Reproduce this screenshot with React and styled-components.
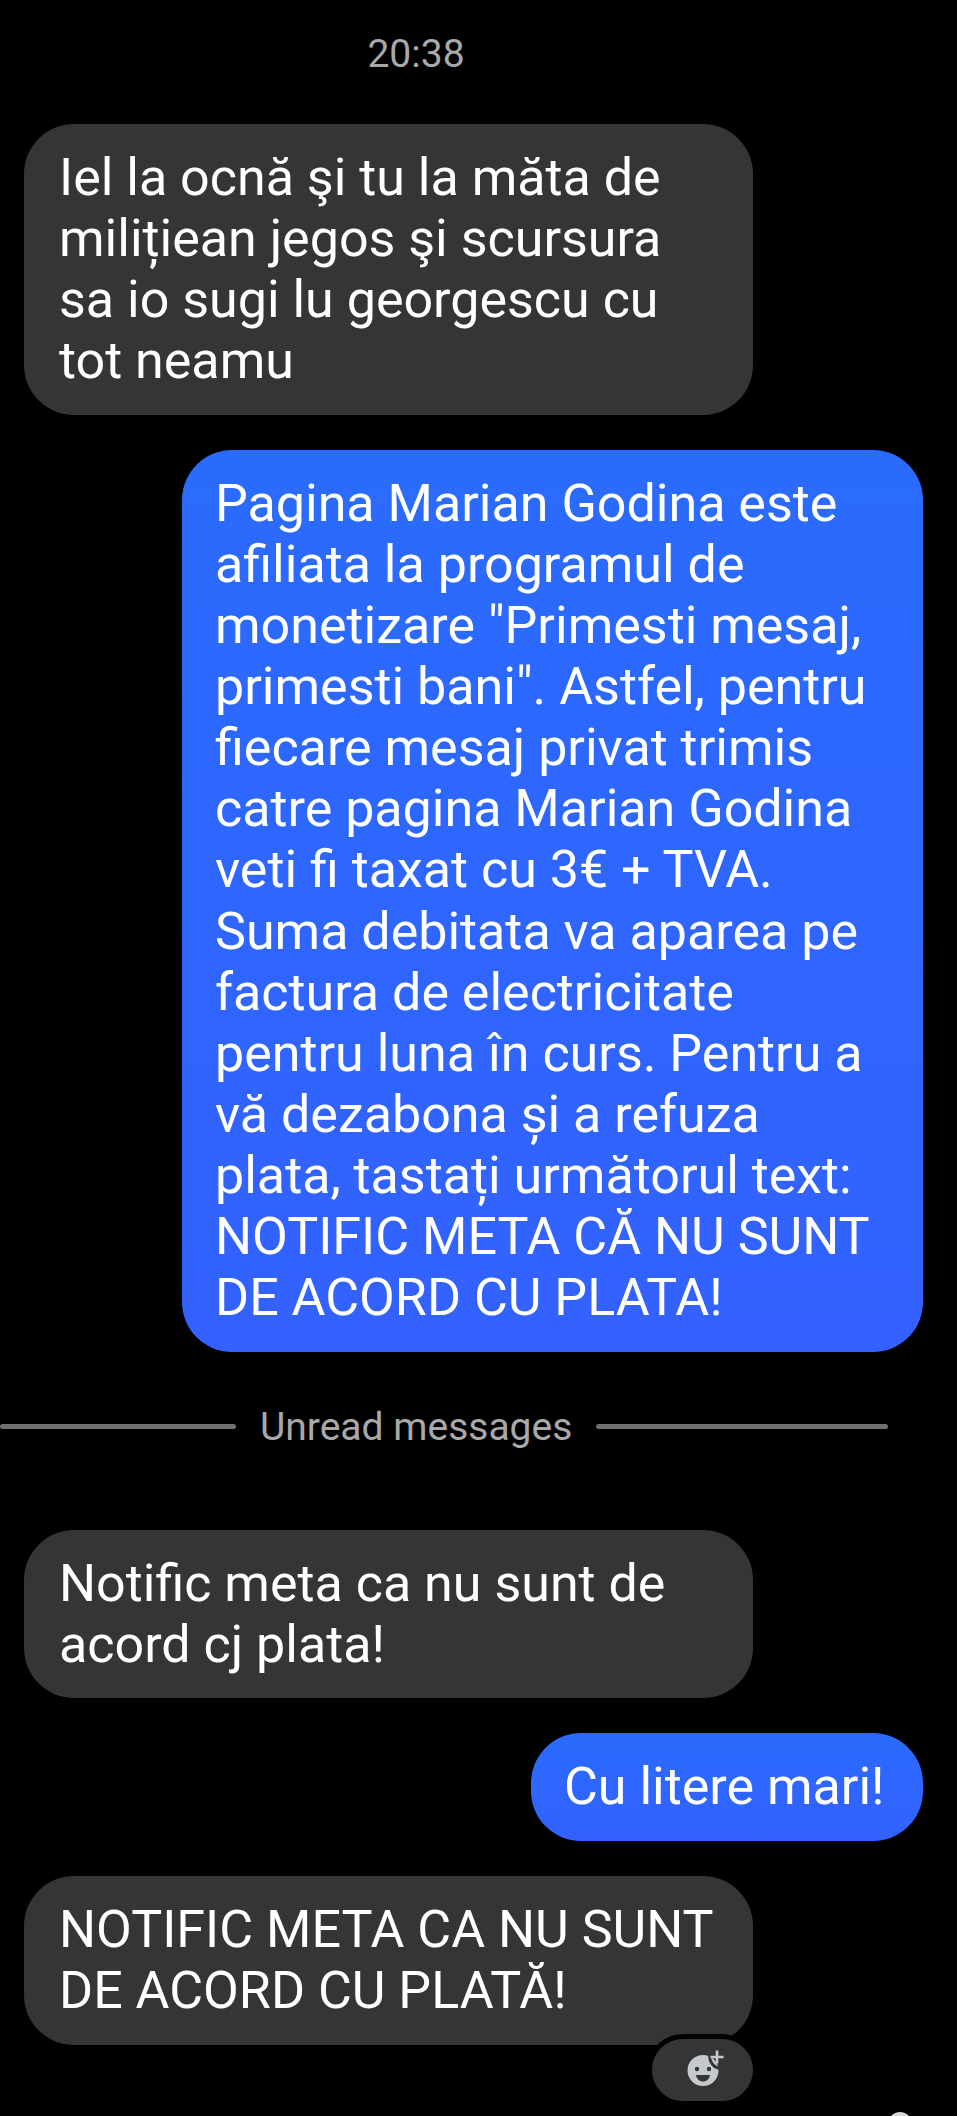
import React from "react";
import styled, { createGlobalStyle } from "styled-components";

const GlobalStyle = createGlobalStyle`
    html, body {
        margin: 0;
        padding: 0;
        background: #000;
    }
`;

const Screen = styled.div`
    position: relative;
    width: 957px;
    height: 2116px;
    overflow: hidden;
    background: #000;
    font-family: Roboto, "Liberation Sans", sans-serif;
`;

const Time = styled.div`
    height: 124px;
    padding: 32px 125px 0 0;
    box-sizing: border-box;
    text-align: center;
    font-size: 39px;
    line-height: 44px;
    color: #a9a9a9;
`;

const Thread = styled.div`
    display: flex;
    flex-direction: column;
    gap: 35px;
    padding: 0 34px 0 24px;
`;

const Bubble = styled.div`
    position: relative;
    box-sizing: border-box;
    padding: 23px 0 23.5px ${(props) => (props.mine ? "33px" : "35px")};
    border-radius: 50px;
    font-size: 52px;
    line-height: 61.1px;
    color: #fff;
    white-space: nowrap;
    ${(props) =>
        props.mine
            ? `
        align-self: flex-end;
        width: ${props.width}px;
        background: linear-gradient(180deg, #2a6bfd 0%, #3361ff 100%);
    `
            : `
        align-self: flex-start;
        width: 729px;
        background: #353535;
    `}
`;

const Divider = styled.div`
    display: flex;
    align-items: center;
    gap: 24px;
    height: 50px;
    margin: 15px 35px 43px -24px;
    font-size: 39px;
    color: #a9a9a9;
    white-space: nowrap;
`;

const Rule = styled.span`
    flex: ${(props) => (props.left ? "0 0 236px" : "1 1 auto")};
    height: 5px;
    border-radius: 3px;
    background: #6f6f6f;
`;

const Reaction = styled.div`
    position: absolute;
    right: -5px;
    bottom: -61px;
    display: flex;
    align-items: center;
    justify-content: center;
    width: 101px;
    height: 62px;
    border: 5px solid #000;
    border-radius: 36px;
    background: #353535;
`;

const HomeDot = styled.span`
    position: absolute;
    left: 888px;
    top: 2112px;
    width: 24px;
    height: 24px;
    border-radius: 50%;
    background: #d8d8d8;
`;

function ReactionIcon() {
    return (
        <svg width="42" height="40" viewBox="-4 2.5 42 40">
            <circle cx="17" cy="23" r="15.5" fill="#c5c8cc" />
            <circle cx="11" cy="21.5" r="2.2" fill="#353535" />
            <circle cx="23" cy="21.5" r="2.2" fill="#353535" />
            <path d="M10 27.5h14c-.6 4-3.300 6.500-7 6.500s-6.400-2.500-7-6.500z" fill="#353535" />
            <path d="M24 7a12 12 0 0 0 10 14" fill="none" stroke="#353535" strokeWidth="3" />
            <path d="M31 3v13M24.500 9.500h13" fill="none" stroke="#c5c8cc" strokeWidth="2.600" />
        </svg>
    );
}

export default function App() {
    return (
        <Screen>
            <GlobalStyle />
            <Time>20:38</Time>
            <Thread>
                <Bubble>
                    Iel la ocnă şi tu la măta de
                    <br />
                    milițiean jegos şi scursura
                    <br />
                    sa io sugi lu georgescu cu
                    <br />
                    tot neamu
                </Bubble>
                <Bubble mine width={741}>
                    Pagina Marian Godina este
                    <br />
                    afiliata la programul de
                    <br />
                    monetizare "Primesti mesaj,
                    <br />
                    primesti bani". Astfel, pentru
                    <br />
                    fiecare mesaj privat trimis
                    <br />
                    catre pagina Marian Godina
                    <br />
                    veti fi taxat cu 3€ + TVA.
                    <br />
                    Suma debitata va aparea pe
                    <br />
                    factura de electricitate
                    <br />
                    pentru luna în curs. Pentru a
                    <br />
                    vă dezabona și a refuza
                    <br />
                    plata, tastați următorul text:
                    <br />
                    NOTIFIC META CĂ NU SUNT
                    <br />
                    DE ACORD CU PLATA!
                </Bubble>
                <Divider>
                    <Rule left />
                    Unread messages
                    <Rule />
                </Divider>
                <Bubble>
                    Notific meta ca nu sunt de
                    <br />
                    acord cj plata!
                </Bubble>
                <Bubble mine width={392}>
                    Cu litere mari!
                </Bubble>
                <Bubble>
                    NOTIFIC META CA NU SUNT
                    <br />
                    DE ACORD CU PLATĂ!
                    <Reaction>
                        <ReactionIcon />
                    </Reaction>
                </Bubble>
            </Thread>
            <HomeDot />
        </Screen>
    );
}
